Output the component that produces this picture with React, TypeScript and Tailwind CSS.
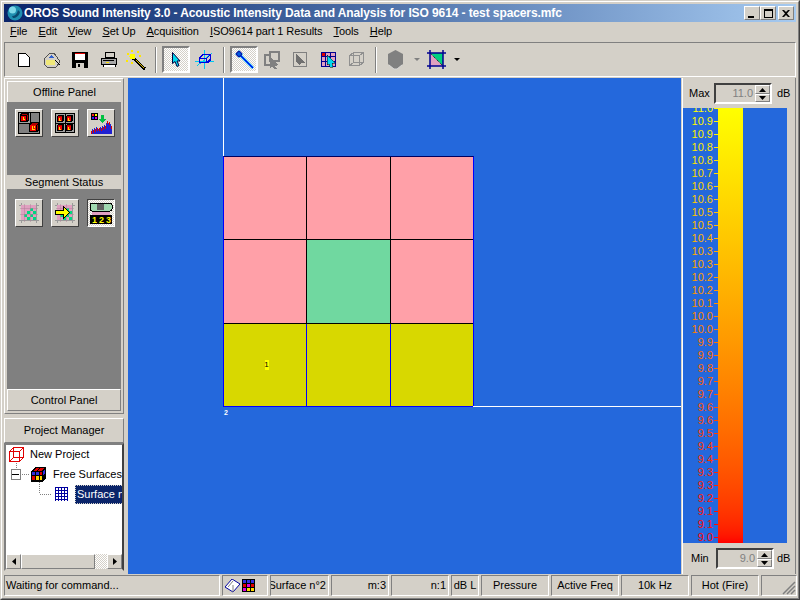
import type { ReactNode } from 'react';

const menus = [
  ['F', 'ile'],
  ['E', 'dit'],
  ['V', 'iew'],
  ['S', 'et Up'],
  ['A', 'cquisition'],
  ['I', 'SO9614 part 1 Results'],
  ['T', 'ools'],
  ['H', 'elp'],
];

const scale = [
  '11.0', '10.9', '10.9', '10.8', '10.8', '10.7', '10.6', '10.6', '10.5', '10.5', '10.4', '10.3',
  '10.3', '10.2', '10.2', '10.1', '10.0', '10.0', '9.9', '9.9', '9.8', '9.7', '9.7', '9.6', '9.6',
  '9.5', '9.4', '9.4', '9.3', '9.3', '9.2', '9.1', '9.1', '9.0',
];

const bars = [11, 9, 10, 8, 9, 7, 8, 9, 8, 7, 8, 6, 7, 5, 6, 3, 1, 3, 2, 4, 6];

function Svg({ w, h, children }: { w: number; h: number; children: ReactNode }) {
  return (
    <svg width={w} height={h} viewBox={`0 0 ${w} ${h}`} shapeRendering="crispEdges" className="block shrink-0">
      {children}
    </svg>
  );
}

function ToolBtn({ pressed, children, w = 'w-7' }: { pressed?: boolean; children?: ReactNode; w?: string }) {
  return (
    <div
      className={`${w} h-[27px] flex items-center justify-center ${
        pressed
          ? 'border-2 border-t-[#808080] border-l-[#808080] border-r-white border-b-white bg-[repeating-conic-gradient(#ffffff_0_25%,#d4d0c8_0_50%)] bg-[length:2px_2px]'
          : ''
      }`}
    >
      {children}
    </div>
  );
}

function Sep() {
  return <div className="w-[2px] h-[26px] mx-[5px] border-l border-l-[#808080] border-r border-r-white" />;
}

function PanelBtn({ pressed, children }: { pressed?: boolean; children: ReactNode }) {
  return (
    <div
      className={`w-7 h-7 flex items-center justify-center border ${
        pressed
          ? 'border-t-[#404040] border-l-[#404040] border-r-white border-b-white bg-[repeating-conic-gradient(#ffffff_0_25%,#d4d0c8_0_50%)] bg-[length:2px_2px]'
          : 'border-t-white border-l-white border-r-[#404040] border-b-[#404040] bg-[#d4d0c8]'
      }`}
    >
      {children}
    </div>
  );
}

// red cube with yellow hatching, s is the outer size
function RedCube({ x, y, s }: { x: number; y: number; s: number }) {
  return (
    <g transform={`translate(${x} ${y}) scale(${s / 10})`}>
      <path d="M0 2L2 0h8v8l-2 2H0z" fill="#000" />
      <path d="M1 3h6v6H1z" fill="#f00000" />
      <path d="M3 1h6L7.500 2.500H1.500zM8 3l1-1v5l-1 1z" fill="#b00000" />
      <path d="M3 4h1v3h2v1H3zM5 4h1v2H5z" fill="#ffd800" />
    </g>
  );
}

function SegGrid() {
  const on = ['3,1', '2,2', '4,2', '1,3', '3,3', '2,4', '4,4'];
  const cells = [];
  for (let r = 0; r < 5; r++) {
    for (let c = 0; c < 5; c++) {
      cells.push(<rect key={`${r}-${c}`} x={2 + c * 3} y={2 + r * 3} width="3" height="3" fill={on.includes(`${c},${r}`) ? '#00d880' : '#e0a0c0'} />);
    }
  }
  return (
    <>
      <path d="M2 0v20M17 0v20M0 2h20M0 17h20" stroke="#9a9a9a" strokeWidth="1" />
      {cells}
      <path d="M5.500 1v18M11.500 1v18M1 5.500h18M1 11.500h18" stroke="#b08098" strokeWidth="0.500" />
    </>
  );
}

function Raised({ className, children }: { className: string; children?: ReactNode }) {
  return (
    <div className={`flex items-center justify-center border border-t-white border-l-white border-r-[#808080] border-b-[#808080] bg-[#d4d0c8] ${className}`}>
      {children}
    </div>
  );
}

function Arrow({ dir }: { dir: 'up' | 'down' | 'left' | 'right' }) {
  const d = { up: 'M3.500 0L7 4H0z', down: 'M0 0h7L3.500 4z', left: 'M4 0v7L0 3.500z', right: 'M0 0v7l4-3.500z' }[dir];
  const vertical = dir === 'up' || dir === 'down';
  return (
    <svg width={vertical ? 7 : 4} height={vertical ? 4 : 7} className="block">
      <path d={d} fill="#000" />
    </svg>
  );
}

function SpinField({ label, ml, value, gap }: { label: string; ml: string; value: string; gap: string }) {
  return (
    <div className="flex items-center h-full">
      <span className={`${ml} w-[25px]`}>{label}</span>
      <div className="w-[58px] h-[21px] flex border-2 border-t-[#404040] border-l-[#404040] border-r-white border-b-white bg-[#d4d0c8]">
        <span className="flex-1 text-right pr-[2px] text-[#808080] leading-[17px]">{value}</span>
        <div className="w-[15px] flex flex-col">
          <Raised className="h-[9px] border-r-[#404040] border-b-[#404040]">
            <Arrow dir="up" />
          </Raised>
          <Raised className="h-[8px] border-r-[#404040] border-b-[#404040]">
            <Arrow dir="down" />
          </Raised>
        </div>
      </div>
      <span className={gap}>dB</span>
    </div>
  );
}

function Cell({ w, className = '', children }: { w: string; className?: string; children?: ReactNode }) {
  return (
    <div className={`${w} shrink-0 h-full flex items-center overflow-hidden border border-t-[#808080] border-l-[#808080] border-r-white border-b-white ${className}`}>
      {children}
    </div>
  );
}

export default function App() {
  return (
    <div className="w-[800px] h-[600px] overflow-hidden border border-[#d4d0c8] border-r-[#404040] border-b-[#404040] bg-[#d4d0c8] text-[11px] text-black [font-family:'Liberation_Sans',sans-serif]">
      <div className="h-full flex flex-col p-[2px] border border-white border-r-[#808080] border-b-[#808080]">
        {/* Title bar */}
        <div className="h-[18px] shrink-0 flex items-center pl-[3px] pr-[2px] bg-gradient-to-r from-[#0a246a] to-[#a6caf0]">
          <svg width="16" height="16" viewBox="0 0 16 16" className="block shrink-0">
            <circle cx="8" cy="8" r="7.500" fill="#1f8fb0" />
            <circle cx="5.500" cy="5" r="3.500" fill="#7fd8e8" />
            <path d="M5 11c3 0 5-2 6-6l2 2c-1 4-4 6-7 6z" fill="#0a4a70" />
          </svg>
          <span className="ml-[1px] text-white font-bold text-[12px] tracking-[-0.1px] whitespace-nowrap">
            OROS Sound Intensity 3.0 - Acoustic Intensity Data and Analysis for ISO 9614 - test spacers.mfc
          </span>
          <div className="ml-auto flex">
            <Raised className="w-4 h-[14px] border-r-[#404040] border-b-[#404040]">
              <div className="w-[6px] h-[2px] bg-black mt-[7px] -ml-[2px]" />
            </Raised>
            <Raised className="w-4 h-[14px] border-r-[#404040] border-b-[#404040]">
              <div className="w-[9px] h-[9px] border border-t-2 border-black" />
            </Raised>
            <Raised className="w-4 h-[14px] ml-[2px] border-r-[#404040] border-b-[#404040]">
              <svg width="8" height="7" className="block">
                <path d="M0 0h2l2 2 2-2h2L5 3.500 8 7H6L4 5 2 7H0l3-3.500z" fill="#000" />
              </svg>
            </Raised>
          </div>
        </div>

        {/* Menu */}
        <div className="h-[19px] shrink-0 flex items-center gap-[11px] pl-[6px] tracking-[-0.08px] whitespace-nowrap">
          {menus.map(([first, rest]) => (
            <span key={first}>
              <span className="underline">{first}</span>
              {rest}
            </span>
          ))}
        </div>

        {/* Toolbar */}
        <div className="h-[35px] shrink-0 mt-[1px] flex items-center pl-[5px] border border-t-[#808080] border-l-[#808080] border-r-white border-b-white">
          <ToolBtn>
            <Svg w={12} h={14}>
              <path d="M0.500 0.500h7l4 4v9h-11z" fill="#fff" stroke="#000" />
            </Svg>
          </ToolBtn>
          <ToolBtn>
            <Svg w={18} h={16}>
              <path d="M1 7l6-6h4l3 4 3 5-4 5H4L1 12z" fill="#d4d0c8" stroke="#505050" />
              <path d="M5 6l3-3 3 3z" fill="#3060d0" />
              <rect x="3" y="8" width="9" height="5" fill="#f0e878" />
              <path d="M12 8l5 5" stroke="#000" />
            </Svg>
          </ToolBtn>
          <ToolBtn>
            <Svg w={16} h={16}>
              <rect x="0" y="0" width="16" height="16" rx="1" fill="#000" />
              <rect x="3" y="1" width="10" height="1" fill="#e00000" />
              <rect x="3" y="2" width="10" height="6" fill="#fff" />
              <rect x="4" y="11" width="8" height="5" fill="#d4d0c8" />
              <rect x="6" y="12" width="2" height="3" fill="#000" />
            </Svg>
          </ToolBtn>
          <ToolBtn>
            <Svg w={17} h={15}>
              <rect x="5" y="0" width="9" height="5" fill="#d4d0c8" stroke="#000" />
              <path d="M1 6h15v6H1z" fill="#a8a8a8" stroke="#000" />
              <rect x="3" y="8" width="11" height="1" fill="#000" />
              <rect x="3" y="12" width="12" height="3" fill="#fff" stroke="#000" />
              <rect x="6" y="10" width="3" height="1" fill="#ffe000" />
            </Svg>
          </ToolBtn>
          <ToolBtn>
            <Svg w={20} h={20}>
              <path d="M7 8l12 11" stroke="#000" strokeWidth="3" />
              <path d="M10 10l8 8" stroke="#e0c000" strokeWidth="1" />
              <circle cx="6.500" cy="6.500" r="3" fill="#ffff00" />
              <path d="M1 3h2v2H1zM5 0h2v2H5zM11 1h2v2h-2zM13 5h2v2h-2zM0 10h2v2H0zM5 12h2v2H5z" fill="#ffe800" />
            </Svg>
          </ToolBtn>
          <Sep />
          <ToolBtn pressed>
            <svg width="9" height="15" viewBox="0 0 9 15" className="block">
              <path d="M0.500 0.500v11l2.500-2 2 5 2-1-2-4.500h3z" fill="#00d8f0" stroke="#000040" />
            </svg>
          </ToolBtn>
          <ToolBtn>
            <Svg w={19} h={19}>
              <path d="M9 0v19M0 11h19M2 16L17 3" stroke="#00c8f0" />
              <path d="M4.500 7.500l4-3h7v5l-3 3h-8z" fill="none" stroke="#0000e0" strokeWidth="1.500" />
              <path d="M4.500 8.500h7v4M11.500 8.500l4-4" fill="none" stroke="#0000e0" />
            </Svg>
          </ToolBtn>
          <Sep />
          <ToolBtn pressed>
            <svg width="19" height="19" viewBox="0 0 19 19" className="block">
              <path d="M5 5l13 13" stroke="#00c8f0" strokeWidth="2.500" />
              <path d="M5 5l13 13" stroke="#0000f0" strokeWidth="1.200" />
              <path d="M4 0v8M0 4h8" stroke="#00a0f0" />
              <circle cx="4" cy="4" r="2.500" fill="#0058e0" stroke="#000090" />
            </svg>
          </ToolBtn>
          <ToolBtn>
            <Svg w={16} h={18}>
              <rect x="0.500" y="3.500" width="10" height="10" fill="#d4d0c8" stroke="#808080" strokeWidth="2" />
              <rect x="5.500" y="0.500" width="9" height="9" fill="#d4d0c8" stroke="#808080" strokeWidth="2" />
              <path d="M6 6l8 8-3 1 2 3h-3l-2-3-2 2z" fill="#808080" />
            </Svg>
          </ToolBtn>
          <ToolBtn>
            <Svg w={14} h={15}>
              <rect x="0.500" y="0.500" width="13" height="14" fill="#d4d0c8" stroke="#808080" />
              <path d="M3 2l9 9-4 0-1 3-4-4z" fill="#707070" />
            </Svg>
          </ToolBtn>
          <ToolBtn>
            <Svg w={15} h={16}>
              <rect x="0" y="0" width="15" height="15" fill="#e0a0c0" />
              <rect x="0" y="0" width="4" height="4" fill="#e00000" />
              <path d="M0.500 0v15M4.500 0v15M9.500 0v15M14.500 0v15M0 0.500h15M0 4.500h15M0 9.500h15M0 14.500h15" stroke="#000090" />
              <path d="M6 3l8 8-3 0 1 4-3 0-1-3-2 1z" fill="#00d8f0" stroke="#000" strokeWidth="0.500" />
            </Svg>
          </ToolBtn>
          <ToolBtn>
            <Svg w={15} h={15}>
              <rect x="0.500" y="3.500" width="10" height="10" fill="none" stroke="#909090" />
              <rect x="4.500" y="0.500" width="10" height="10" fill="none" stroke="#909090" />
              <path d="M0.500 3.500l4-3M10.500 3.500l4-3M0.500 13.500l4-3M10.500 13.500l4-3" stroke="#909090" />
            </Svg>
          </ToolBtn>
          <Sep />
          <div className="-ml-[1px] w-7 flex justify-center">
            <svg width="17" height="20" viewBox="0 0 17 20" className="block">
              <path d="M8.500 0L16 4v10l-6 5H7l-6-5V4z" fill="#808080" />
              <path d="M2 15l5 4h3l5-4" fill="none" stroke="#d8d8d8" />
            </svg>
          </div>
          <svg width="6" height="3" className="block ml-[5px]">
            <path d="M0 0h6L3 3z" fill="#808080" />
          </svg>
          <div className="ml-[7px]">
            <svg width="19" height="19" viewBox="0 0 19 19" className="block">
              <path d="M3 3h13v13z" fill="#00d080" />
              <path d="M3 3l13 13H3z" fill="#e0a0c0" />
              <path d="M3 3l13 13" stroke="#000" strokeDasharray="1 1" />
              <path d="M3 0v19M16 0v19M0 3h19M0 16h19" stroke="#000090" strokeWidth="1.500" />
            </svg>
          </div>
          <svg width="6" height="3" className="block ml-[8px]">
            <path d="M0 0h6L3 3z" fill="#000" />
          </svg>
        </div>

        {/* Main area */}
        <div className="flex-1 min-h-0 mt-[1px] flex">
          {/* Left column */}
          <div className="w-[124px] shrink-0 flex flex-col">
            <div className="w-[120px] h-[336px] p-[2px] flex flex-col border border-t-white border-l-white border-r-[#808080] border-b-[#808080]">
              <div className="h-[21px] flex items-center justify-center border-t border-l border-white">Offline Panel</div>
              <div className="h-[73px] flex gap-2 pl-2 pt-[7px] bg-[#808080]">
                <PanelBtn>
                  <Svg w={22} h={22}>
                    <rect x="0.500" y="0.500" width="21" height="21" fill="#808080" stroke="#000" />
                    <rect x="0.500" y="0.500" width="12" height="11" fill="#a0a0a0" stroke="#000" />
                    <RedCube x={2} y={1} s={9} />
                    <RedCube x={11} y={10} s={10} />
                  </Svg>
                </PanelBtn>
                <PanelBtn>
                  <Svg w={20} h={20}>
                    <rect x="0.500" y="0.500" width="19" height="19" fill="#a0a0a0" stroke="#000" />
                    <path d="M10 0v20M0 10h20" stroke="#000" />
                    <RedCube x={2} y={2} s={7} />
                    <RedCube x={11} y={2} s={7} />
                    <RedCube x={2} y={11} s={7} />
                    <RedCube x={11} y={11} s={7} />
                  </Svg>
                </PanelBtn>
                <PanelBtn>
                  <Svg w={21} h={21}>
                    <rect x="0" y="0" width="7" height="7" fill="#000" />
                    <path d="M1 1h2v2H1z" fill="#ff2020" />
                    <path d="M4 1h2v2H4z" fill="#ffff00" />
                    <path d="M1 4h2v2H1z" fill="#2020ff" />
                    <path d="M4 4h2v2H4z" fill="#e000e0" />
                    {bars.map((b, i) => (
                      <g key={i}>
                        <rect x={i} y={b + 7} width="1" height={14 - b} fill={i % 2 ? '#2020d0' : '#e00000'} />
                        <rect x={i} y={b + 10} width="1" height={Math.max(11 - b, 0)} fill="#2020d0" />
                      </g>
                    ))}
                    <path d="M10 2h3v4h2l-3.500 4L8 6h2z" fill="#00c040" />
                  </Svg>
                </PanelBtn>
              </div>
              <div className="h-[14px] flex items-center justify-center">Segment Status</div>
              <div className="h-[200px] flex gap-2 pl-2 pt-[10px] bg-[#808080]">
                <PanelBtn>
                  <Svg w={20} h={20}>
                    <SegGrid />
                  </Svg>
                </PanelBtn>
                <PanelBtn>
                  <Svg w={20} h={20}>
                    <SegGrid />
                    <path d="M0.500 7.500h8V3.500l6 6-6 6v-4h-8z" fill="#ffff00" stroke="#000" />
                  </Svg>
                </PanelBtn>
                <PanelBtn pressed>
                  <Svg w={24} h={24}>
                    <rect x="1" y="2" width="22" height="8" rx="2" fill="#a0d8b0" stroke="#000" />
                    <rect x="8" y="3" width="7" height="6" fill="#606060" />
                    <rect x="3" y="11" width="18" height="3" fill="#e0a0c0" />
                    <rect x="1" y="14" width="22" height="9" fill="#000" />
                    <text x="3" y="22" fontSize="9" fontWeight="700" fill="#ffff00">1</text>
                    <text x="10" y="22" fontSize="9" fontWeight="700" fill="#ffff00">2</text>
                    <text x="17" y="22" fontSize="9" fontWeight="700" fill="#ffff00">3</text>
                  </Svg>
                </PanelBtn>
              </div>
              <div className="h-[22px] flex items-center justify-center border border-t-white border-l-white border-r-[#808080] border-b-[#808080]">Control Panel</div>
            </div>
            <Raised className="mt-1 w-[120px] h-[25px] shrink-0 border-r-[#404040] border-b-[#404040]">Project Manager</Raised>
            <div className="w-[120px] flex-1 min-h-0 mb-[3px] flex flex-col border-2 border-t-[#808080] border-l-[#808080] border-r-[#404040] border-b-[#d4d0c8] bg-white">
              <div className="relative flex-1 min-h-0 overflow-hidden">
                <svg width="60" height="60" className="absolute left-0 top-0">
                  <path d="M10.500 16v8M16 29.500h8M33.500 37v12M34 49.500h12" fill="none" stroke="#808080" strokeDasharray="1 1" />
                </svg>
                <div className="relative h-[18px] flex items-center pl-[3px]">
                  <Svg w={15} h={15}>
                    <rect x="0.500" y="4.500" width="10" height="10" fill="none" stroke="#e00000" />
                    <rect x="4.500" y="0.500" width="10" height="10" fill="none" stroke="#e00000" />
                    <path d="M0.500 4.500l4-4M10.500 4.500l4-4M0.500 14.500l4-4M10.500 14.500l4-4" stroke="#e00000" />
                  </Svg>
                  <span className="ml-[6px]">New Project</span>
                </div>
                <div className="relative h-5 mt-[1px] flex items-center pl-[5px] whitespace-nowrap">
                  <div className="w-[11px] h-[11px] flex items-center justify-center border border-[#808080] bg-white">
                    <div className="w-[7px] h-[1px] bg-black" />
                  </div>
                  <div className="ml-[10px]">
                    <Svg w={15} h={15}>
                      <path d="M0 4l4-4h11v11l-4 4H0z" fill="#000" />
                      <path d="M1 5h3v3H1zM5 5h3v3H5z" fill="#3030e0" />
                      <path d="M9 5h2v3H9zM1 9h3v4H1z" fill="#e00000" />
                      <path d="M5 9h3v4H5zM9 9h2v4H9z" fill="#ffd800" />
                      <path d="M5 1h3l-2 3H3zM9 1h4l-2 3H7z" fill="#e00000" />
                      <path d="M12 4l2-2v4l-2 2z" fill="#3030e0" />
                    </Svg>
                  </div>
                  <span className="ml-[7px]">Free Surfaces</span>
                </div>
                <div className="relative h-5 flex items-center pl-[49px] whitespace-nowrap">
                  <Svg w={14} h={14}>
                    <path d="M0.500 0v14M3.500 0v14M6.500 0v14M9.500 0v14M12.500 0v14M0 0.500h13M0 3.500h13M0 6.500h13M0 9.500h13M0 12.500h13" stroke="#0000a0" />
                  </Svg>
                  <span className="ml-[6px] h-[19px] pl-[1px] pr-4 flex items-center bg-[#0a246a] text-white border border-dotted border-[#d4d0c8]">Surface n°2</span>
                </div>
              </div>
              <div className="h-[15px] shrink-0 flex bg-[repeating-conic-gradient(#ffffff_0_25%,#d4d0c8_0_50%)] bg-[length:2px_2px]">
                <Raised className="w-[15px] h-full border-r-[#404040] border-b-[#404040]">
                  <Arrow dir="left" />
                </Raised>
                <Raised className="w-[74px] h-full border-r-[#404040] border-b-[#404040]" />
                <div className="flex-1" />
                <Raised className="w-[15px] h-full border-r-[#404040] border-b-[#404040]">
                  <Arrow dir="right" />
                </Raised>
              </div>
            </div>
          </div>

          {/* Canvas */}
          <div className="relative flex-1 min-w-0 bg-[#2468dc] overflow-hidden">
            <div className="absolute left-[95px] top-0 w-[1px] h-[78px] bg-white" />
            <div className="absolute left-[345px] right-0 top-[328px] h-[1px] bg-white" />
            <div className="ml-[95px] mt-[78px] w-[251px] grid grid-cols-[83px_84px_82px] grid-rows-[83px_84px_82px] border border-[#0000ff] border-t-[#000060]">
              <div className="bg-[#ffa0a8] border-r border-b border-black" />
              <div className="bg-[#ffa0a8] border-r border-b border-black" />
              <div className="bg-[#ffa0a8] border-b border-black" />
              <div className="bg-[#ffa0a8] border-r border-b border-black" />
              <div className="bg-[#70d8a0] border-r border-b border-black" />
              <div className="bg-[#ffa0a8] border-b border-black" />
              <div className="bg-[#d8d800] border-r border-[#0000ff] flex items-center justify-center">
                <span className="w-[4px] h-[10px] ml-[3px] -mt-[1px] flex justify-center leading-[10px] text-[8px] bg-[#ffff00]">1</span>
              </div>
              <div className="bg-[#d8d800] border-r border-[#0000ff]" />
              <div className="bg-[#d8d800]" />
            </div>
            <div className="ml-[96px] mt-[2px] text-[7px] leading-[8px] font-bold text-white">2</div>
          </div>

          {/* Colour scale */}
          <div className="w-[114px] ml-[1px] shrink-0 flex flex-col border-l border-l-white border-r border-r-[#808080]">
            <div className="h-[25px] mt-[3px] shrink-0">
              <SpinField label="Max" ml="ml-[6px]" value="11.0" gap="ml-[5px]" />
            </div>
            <div className="h-[435px] mt-[2px] shrink-0 w-[104px] flex overflow-hidden bg-[#2468dc]">
              <div className="w-[35px] -mt-[6px] shrink-0">
                {scale.map((v, i) => {
                  const g = Math.round(255 * (1 - (i * 13) / 435));
                  const color = `rgb(255, ${g}, 0)`;
                  return (
                    <div key={i} className="h-[13px] flex items-center justify-end text-[11px] leading-[13px]" style={{ color }}>
                      <span>{v}</span>
                      <span className="ml-[1px] w-[4px] h-[1px]" style={{ backgroundColor: color }} />
                    </div>
                  );
                })}
              </div>
              <div className="w-[25px] bg-gradient-to-b from-[#ffff00] to-[#ff0000]" />
            </div>
            <div className="flex-1">
              <SpinField label="Min" ml="ml-[8px]" value="9.0" gap="ml-[3px]" />
            </div>
          </div>
        </div>

        {/* Status bar */}
        <div className="h-[21px] mt-[1px] shrink-0 flex gap-[2px] whitespace-nowrap">
          <Cell w="w-[216px]" className="pl-[1px]">Waiting for command...</Cell>
          <Cell w="w-[46px]" className="pl-[2px] gap-[1px]">
            <svg width="16" height="14" viewBox="0 0 16 14" className="block">
              <path d="M0 8l7-8 8 5-7 8z" fill="#fff" stroke="#0000a0" />
              <path d="M3 8l5-6M8 13V6" stroke="#808080" fill="none" />
            </svg>
            <Svg w={13} h={13}>
              <rect width="13" height="13" fill="#000" />
              <path d="M1 1h3v3H1zM5 1h3v3H5zM9 1h3v3H9z" fill="#3030e0" />
              <path d="M1 5h3v3H1zM9 5h3v3H9z" fill="#e00000" />
              <path d="M5 5h3v3H5zM1 9h3v3H1z" fill="#e000e0" />
              <path d="M5 9h3v3H5zM9 9h3v3H9z" fill="#ffd800" />
            </Svg>
          </Cell>
          <Cell w="w-[59px]" className="justify-end pr-[2px]">Surface n°2</Cell>
          <Cell w="w-[58px]" className="justify-end pr-[2px]">m:3</Cell>
          <Cell w="w-[58px]" className="justify-end pr-[2px]">n:1</Cell>
          <Cell w="w-[28px]" className="justify-center">dB L</Cell>
          <Cell w="w-[68px]" className="justify-center">Pressure</Cell>
          <Cell w="w-[68px]" className="justify-center">Active Freq</Cell>
          <Cell w="w-[68px]" className="justify-center">10k Hz</Cell>
          <Cell w="w-[68px]" className="justify-center">Hot (Fire)</Cell>
          <Cell w="w-[36px]" className="relative">
            <svg width="14" height="14" className="absolute right-0 bottom-0">
              <path d="M13 1L1 13M13 5L5 13M13 9L9 13" stroke="#808080" strokeWidth="1.500" />
            </svg>
          </Cell>
        </div>
      </div>
    </div>
  );
}
